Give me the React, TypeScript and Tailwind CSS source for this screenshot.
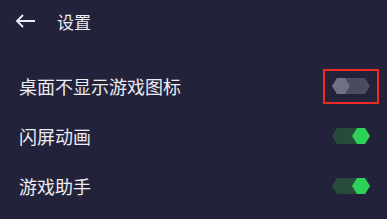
import React from 'react';

function HexToggle({ on }: { on: boolean }) {
  const track = on ? '#284a3b' : '#4a4b5d';
  const knob = on ? '#2fd057' : '#6f7082';
  const kx = on ? 20 : 0;
  return (
    <svg width="38" height="16" viewBox="0 0 38 16" className="block">
      <polygon points="0,8 5,0 33,0 38,8 33,16 5,16" fill={track} />
      <polygon
        points={`${kx},8 ${kx + 5},0 ${kx + 13},0 ${kx + 18},8 ${kx + 13},16 ${kx + 5},16`}
        fill={knob}
      />
    </svg>
  );
}

function Row({ label, on, marked }: { label: string; on: boolean; marked?: boolean }) {
  return (
    <div className="flex h-[50px] items-center justify-between pl-[19px] pr-[17px]">
      <span className="text-[18px] leading-none text-[#ececf2]">{label}</span>
      <div className="relative">
        <HexToggle on={on} />
        {marked && (
          <div className="absolute -left-[9px] -right-[9px] -top-[9px] -bottom-[10px] border-2 border-[#f22a22]" />
        )}
      </div>
    </div>
  );
}

export default function App() {
  return (
    <div
      className="h-[219px] w-[387px] overflow-hidden bg-[#22233a]"
      style={{ fontFamily: '"Noto Sans CJK SC", "Noto Sans", sans-serif' }}
    >
      {/* Header */}
      <div className="flex h-[42px] items-center pl-[15px]">
        <svg width="21" height="14" viewBox="0 0 21 14" className="block">
          <path d="M20 7H2M8 1L2 7l6 6" stroke="#ececf2" strokeWidth="1.8" fill="none" />
        </svg>
        <span className="ml-[21px] text-[17px] leading-none text-[#ececf2]">设置</span>
      </div>
      <div className="h-[19px]" />
      <Row label="桌面不显示游戏图标" on={false} marked />
      <Row label="闪屏动画" on />
      <Row label="游戏助手" on />
    </div>
  );
}
